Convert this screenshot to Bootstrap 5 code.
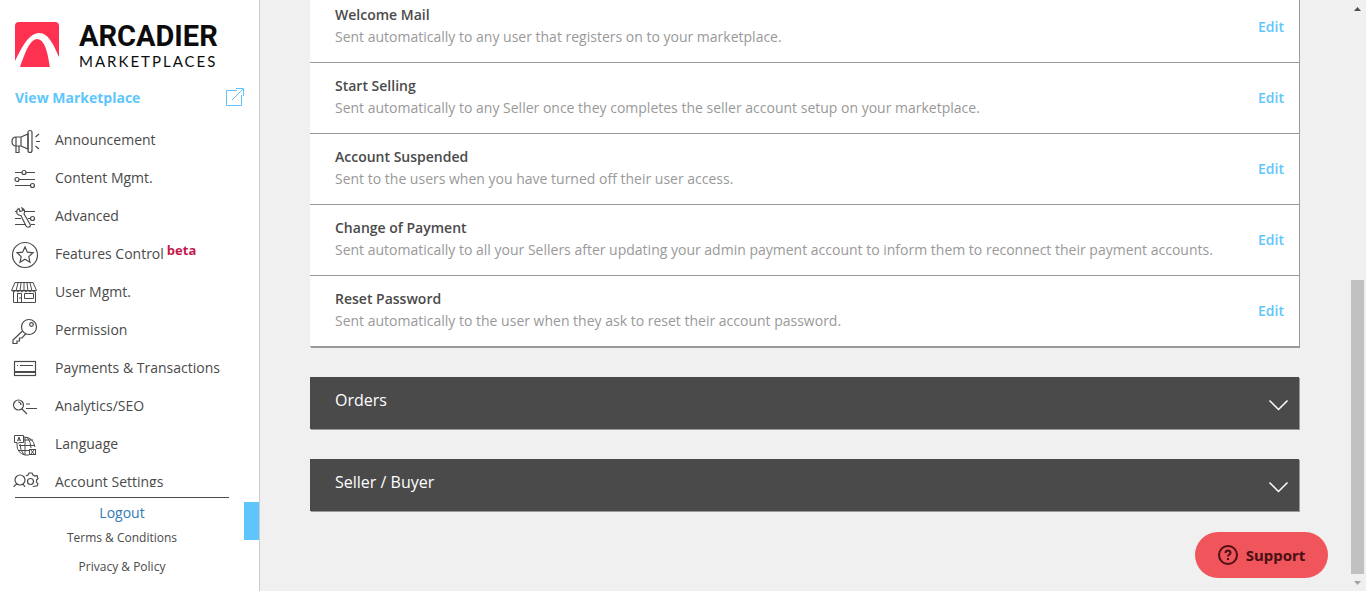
<!DOCTYPE html>
<html lang="en">
<head>
<meta charset="utf-8">
<meta name="viewport" content="width=device-width, initial-scale=1">
<title>Arcadier Marketplaces - Emails</title>
<link href="https://cdn.jsdelivr.net/npm/bootstrap@5.3.0/dist/css/bootstrap.min.css" rel="stylesheet">
<style>
body{font-family:"Open Sans",sans-serif;font-size:14px;line-height:20px;color:#4a4a4a;background:#f0f0f0}
a{text-decoration:none}
.sidebar{width:260px;background:#fff;border-right:1px solid #ccc}
.brand{padding:20px 15px 0;height:70px;color:#0c0c0c}
.brand-name{font:700 29px/32px "Roboto",sans-serif}
.brand-sub{font:400 15px/18px "Lato",sans-serif;letter-spacing:2px}
.view-link{color:#5ec6fd;font-weight:700;padding:18px 15px 0;height:51px}
.side-menu{flex:1 1 0;min-height:0;overflow:hidden}
.side-menu a{height:38px;color:#4a4a4a}
.side-menu svg{width:30px;height:30px;margin:2px 15px 0 10px;fill:none;stroke:#4a4a4a;stroke-width:1.2;flex-shrink:0}
.beta{color:#c2184f;font:700 13px/13px "Open Sans",sans-serif;padding:0 0 8px 3px}
.side-foot{margin:10px 30px 0 15px;border-top:1px solid #4a4a4a;height:94px;padding-top:5px;font-size:12px}
.side-foot a{color:#4a4a4a;line-height:29px}
.side-foot .logout{color:#337ab7;font-size:14px;line-height:20px}
.collapse-tab{right:0;bottom:51px;width:15px;height:38px;background:#5ec6fd}
.content{padding:0 50px 80px;gap:30px}
.panel{box-shadow:1px 1px 0 #999}
.mail-row{height:71px;border-bottom:1px solid #999;padding:0 15px 0 25px}
.mail-row div{padding-bottom:2px}
.mail-row h2{font-size:14px;line-height:20px;font-weight:600;margin:0 0 2px}
.mail-row p{color:#999;margin:0}
.mail-row a{color:#5ec6fd;font-weight:600}
.section-bar{height:52px;background:#4a4a4a;color:#fff;font-size:16px;padding:0 10px 0 25px}
.section-bar span{padding-bottom:6px}
.section-bar svg{margin-top:4px}
.support{right:38px;bottom:13px;width:133px;height:46px;background:#ef555a;color:#4b0f14;font:700 15px/20px "Noto Sans",sans-serif}
.scroller{width:17px;padding:7px 2px 6px}
.scroll-thumb{height:294px;margin-bottom:7px;background:#c1c1c1}
</style>
</head>
<body>
<div class="d-flex vh-100 overflow-hidden">
<aside class="sidebar d-flex flex-column flex-shrink-0 position-relative">
  <div class="brand d-flex">
    <svg class="me-3 flex-shrink-0" width="44" height="48" viewBox="0 0 44 48" aria-hidden="true"><path fill="#ff3150" d="M4 2h36q4 0 4 4v38l-6 3H5l-5-3V6q0-4 4-4Z"/><path fill="#fff" d="M0 41C7 27 14 13 24 13c10 0 15 13 20 24v11h-9C33 34 30 19 22 19c-7 0-12 14-17 28l-5 1Z"/></svg>
    <div class="ps-1"><div class="brand-name">ARCADIER</div><div class="brand-sub">MARKETPLACES</div></div>
  </div>
  <a class="view-link d-flex justify-content-between" href="#">View Marketplace
    <svg width="18" height="18" viewBox="0 0 18 18" fill="none" stroke="#5ec6fd" aria-hidden="true"><path d="M11 2.500H.5v15h15V7M6 12 17 1M10 .5h7.500V8"/></svg></a>
  <nav class="side-menu">
    <a class="d-flex align-items-center" href="#"><svg viewBox="0 0 30 30"><path d="M6 11h5v9H6q-4 0-4-4.500T6 11ZM6 11v9M11 11l7-3v15l-7-3M6 20v6.500h3V20"/><rect x="18" y="4.500" width="4" height="22" rx="2"/><path d="m25.500 11 3.500-3M26 15.500h4M25.500 20l3.500 3"/></svg>Announcement</a>
    <a class="d-flex align-items-center" href="#"><svg viewBox="0 0 30 30"><path d="M5 8.500h7m4 0h9M9 15.500h16M5 21.500h15"/><circle cx="14" cy="8.500" r="2"/><circle cx="7" cy="15.500" r="2"/><circle cx="22.500" cy="21.500" r="2"/></svg>Content Mgmt.</a>
    <a class="d-flex align-items-center" href="#"><svg viewBox="0 0 30 30"><path d="M5 9.500h2m7 0h11M5 16.500h6m7 0h2M5 22.500h11m5 0h4"/><circle cx="22.500" cy="16.500" r="2"/><path d="M7 11.500q-1-4 2-5l1 3 3-1-1-2.500q4 2 2 6l6 10q1 2.500-1 3-2 .5-3-1L11 13.500q-3 0-4-2Z"/></svg>Advanced</a>
    <a class="d-flex align-items-center" href="#"><svg viewBox="0 0 30 30"><circle cx="15" cy="15" r="12.500"/><path d="m15 7 2.400 5.200 5.600.6-4.200 3.800 1.200 5.600-5-2.900-5 2.900 1.200-5.600L7 12.800l5.600-.6Z"/></svg>Features Control<span class="beta">beta</span></a>
    <a class="d-flex align-items-center" href="#"><svg viewBox="0 0 30 30" style="stroke-width:1"><path d="M5 4.500h18l3.500 8h-25ZM8 5l-2 8M11 5l-1 8M14 5v8M17 5l1 8M20 5l2 8M2 12.500q2 3 4 0 2 3 4 0 2 3 4 0 2 3 4 0 2 3 4 0 2 3 4 0M3.500 14v10.500h22V14M7.500 24v-8.500h4V24M14.500 15.500h9v5h-9ZM10 19v2"/></svg>User Mgmt.</a>
    <a class="d-flex align-items-center" href="#"><svg viewBox="0 0 30 30"><circle cx="19" cy="11" r="7.500"/><circle cx="21.500" cy="8.500" r="1.800"/><path d="m12.500 15-9.500 9v3.500h4V25h2.500v-3H12l4-4.500"/></svg>Permission</a>
    <a class="d-flex align-items-center" href="#"><svg viewBox="0 0 30 30"><rect x="4.500" y="7.500" width="21" height="14"/><path d="M7 11.500h1m2 0h13"/><path stroke-width="2" d="M4 18h22"/></svg>Payments &amp; Transactions</a>
    <a class="d-flex align-items-center" href="#"><svg viewBox="0 0 30 30"><circle cx="8.500" cy="13" r="5"/><path d="m12 17 5 5M8 10q3 0 3 3M16 12h4M16 16.500h11"/></svg>Analytics/SEO</a>
    <a class="d-flex align-items-center" href="#"><svg viewBox="0 0 30 30" style="stroke-width:1"><path d="M4.500 5.500h9v7H9l-2 2v-2H4.500ZM7.500 11 9 7l1.500 4M8 10h2M14 7q9 0 11 10M7 15q0 8 8 10h4M15 7v18M14 10h9M9 15.500h15M8 20.500h11M17 7q4 5 4 11M10 14q0 6 4 11"/><rect x="19.500" y="19.500" width="6" height="5"/><path d="m21 20 3 4m0-4-3 4"/></svg>Language</a>
    <a class="d-flex align-items-center" href="#"><svg viewBox="0 0 30 30"><circle cx="10" cy="12" r="5"/><path d="M3 21q1-4 4-5M13 16l2 3M16 8l2-1 1-2h3l1 2 2 1 2-.5 1 3-1.500 1.500v2l1.500 2-1 2-2 0-2 1-1 2h-3l-1-2"/><circle cx="20.500" cy="13.500" r="3"/></svg>Account Settings</a>
  </nav>
  <div class="side-foot d-flex flex-column align-items-center"><a class="logout" href="#">Logout</a><a href="#">Terms &amp; Conditions</a><a href="#">Privacy &amp; Policy</a></div>
  <button class="collapse-tab position-absolute border-0 p-0" type="button" aria-label="Collapse menu"></button>
</aside>
<main class="content d-flex flex-column justify-content-end flex-grow-1 overflow-hidden">
  <section class="panel bg-white flex-shrink-0">
    <div class="mail-row d-flex align-items-center justify-content-between"><div><h2>Welcome Mail</h2><p>Sent automatically to any user that registers on to your marketplace.</p></div><a href="#">Edit</a></div>
    <div class="mail-row d-flex align-items-center justify-content-between"><div><h2>Start Selling</h2><p>Sent automatically to any Seller once they completes the seller account setup on your marketplace.</p></div><a href="#">Edit</a></div>
    <div class="mail-row d-flex align-items-center justify-content-between"><div><h2>Account Suspended</h2><p>Sent to the users when you have turned off their user access.</p></div><a href="#">Edit</a></div>
    <div class="mail-row d-flex align-items-center justify-content-between"><div><h2>Change of Payment</h2><p>Sent automatically to all your Sellers after updating your admin payment account to inform them to reconnect their payment accounts.</p></div><a href="#">Edit</a></div>
    <div class="mail-row d-flex align-items-center justify-content-between"><div><h2>Reset Password</h2><p>Sent automatically to the user when they ask to reset their account password.</p></div><a href="#">Edit</a></div>
  </section>
  <button type="button" class="section-bar panel border-0 d-flex align-items-center justify-content-between flex-shrink-0"><span>Orders</span><svg width="21" height="12" viewBox="0 0 21 12" fill="none" stroke="#fff" stroke-width="1.500" aria-hidden="true"><path d="m1.500 1.500 9 9 9-9"/></svg></button>
  <button type="button" class="section-bar panel border-0 d-flex align-items-center justify-content-between flex-shrink-0"><span>Seller / Buyer</span><svg width="21" height="12" viewBox="0 0 21 12" fill="none" stroke="#fff" stroke-width="1.500" aria-hidden="true"><path d="m1.500 1.500 9 9 9-9"/></svg></button>
</main>
<div class="scroller d-flex flex-column flex-shrink-0" aria-hidden="true">
  <svg class="mx-auto flex-shrink-0" width="7" height="4" viewBox="0 0 7 4"><path fill="#505050" d="M0 4 3.500 0 7 4Z"/></svg>
  <div class="scroll-thumb mt-auto flex-shrink-0"></div>
  <svg class="mx-auto flex-shrink-0" width="7" height="4" viewBox="0 0 7 4"><path fill="#a3a3a3" d="M0 0h7L3.500 4Z"/></svg>
</div>
</div>
<button type="button" class="support position-fixed border-0 rounded-pill d-flex align-items-center justify-content-center gap-2"><svg width="20" height="20" viewBox="0 0 20 20" fill="none" stroke="currentColor" stroke-width="2" aria-hidden="true"><circle cx="10" cy="10" r="9"/><path d="M7.500 8q0-2.500 2.500-2.500T12.500 8c0 1.500-2.500 1.500-2.500 3.500M10 13v2"/></svg>Support</button>
<script src="https://cdn.jsdelivr.net/npm/bootstrap@5.3.0/dist/js/bootstrap.bundle.min.js"></script>
</body>
</html>
